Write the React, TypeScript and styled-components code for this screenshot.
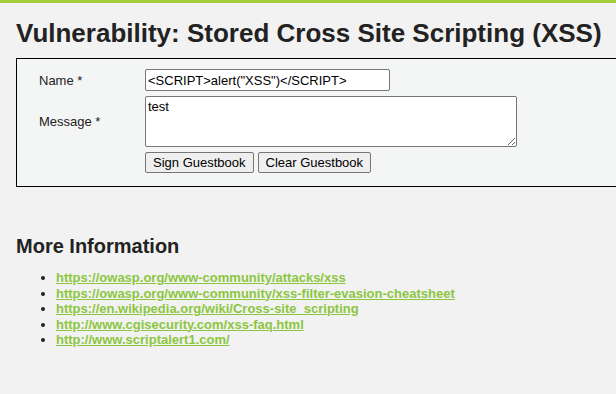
import React, { ReactElement } from "react";
import styled, { createGlobalStyle } from "styled-components";

const links = [
  "https://owasp.org/www-community/attacks/xss",
  "https://owasp.org/www-community/xss-filter-evasion-cheatsheet",
  "https://en.wikipedia.org/wiki/Cross-site_scripting",
  "http://www.cgisecurity.com/xss-faq.html",
  "http://www.scriptalert1.com/",
];

export default function App(): ReactElement {
  return (
    <>
      <GlobalStyle />
      <TopBar />
      <Main>
        <Title>Vulnerability: Stored Cross Site Scripting (XSS)</Title>
        <CodeArea>
          <Form>
            <Label>Name *</Label>
            <TextInput defaultValue={'<SCRIPT>alert("XSS")</SCRIPT>'} />
            <Label>Message *</Label>
            <TextArea defaultValue="test" />
            <span />
            <Buttons>
              <Button>Sign Guestbook</Button>
              <Button>Clear Guestbook</Button>
            </Buttons>
          </Form>
        </CodeArea>
        <SubTitle>More Information</SubTitle>
        <LinkList>
          {links.map((l) => (
            <li key={l}>
              <Link href={l}>{l}</Link>
            </li>
          ))}
        </LinkList>
      </Main>
    </>
  );
}

const GlobalStyle = createGlobalStyle`
  html, body {
    margin: 0;
    overflow: hidden;
    background: #f2f2f2;
    font-family: "Liberation Sans", Arial, sans-serif;
    color: #222;
  }
`;

const TopBar = styled.div`
  height: 3px;
  background: #a4cb39;
`;

const Main = styled.div`
  padding: 0 0 0 16px;
  overflow: hidden;
`;

const Title = styled.h1`
  margin: 13px 0 0;
  font-size: 26px;
  line-height: 34px;
  font-weight: bold;
  color: #222;
  white-space: nowrap;
`;

/* the bordered box runs on past the right edge of the window */
const CodeArea = styled.div`
  margin-top: 8px;
  margin-right: -12px;
  height: 129px;
  box-sizing: border-box;
  border: 1px solid #000;
  background: #f4f5f5;
  padding: 10px 0 0 22px;
`;

const Form = styled.div`
  display: grid;
  grid-template-columns: 106px auto;
  row-gap: 4px;
  align-items: center;
  justify-content: start;
`;

const Label = styled.div`
  font-size: 13px;
  color: #222;
`;

const TextInput = styled.input`
  width: 245px;
  height: 22px;
  box-sizing: border-box;
  border: 1px solid #767676;
  border-radius: 2px;
  padding: 1px 2px;
  font: 13px "Liberation Sans", Arial, sans-serif;
  color: #000;
  background: #fff;
`;

const TextArea = styled.textarea`
  width: 372px;
  height: 51px;
  box-sizing: border-box;
  border: 1px solid #767676;
  border-radius: 2px;
  padding: 2px;
  margin: 1px 0 0;
  font: 13px "Liberation Sans", Arial, sans-serif;
  color: #000;
  background: #fff;
  display: block;
  resize: vertical;
`;

const Buttons = styled.div`
  display: flex;
  gap: 4px;
  margin-top: 1px;
`;

const Button = styled.button`
  height: 21px;
  box-sizing: border-box;
  padding: 0 7px;
  border: 1px solid #767676;
  border-radius: 2px;
  background: #efefef;
  font: 13px "Liberation Sans", Arial, sans-serif;
  color: #000;
`;

const SubTitle = styled.h2`
  margin: 47px 0 0;
  font-size: 20px;
  line-height: 24px;
  font-weight: bold;
  color: #222;
`;

const LinkList = styled.ul`
  margin: 12px 0 0;
  padding-left: 40px;
  font-size: 13px;
  line-height: 15.5px;

  li::marker {
    color: #222;
  }
`;

const Link = styled.a`
  color: #8cc63f;
  font-weight: bold;
  text-decoration: underline;
`;
